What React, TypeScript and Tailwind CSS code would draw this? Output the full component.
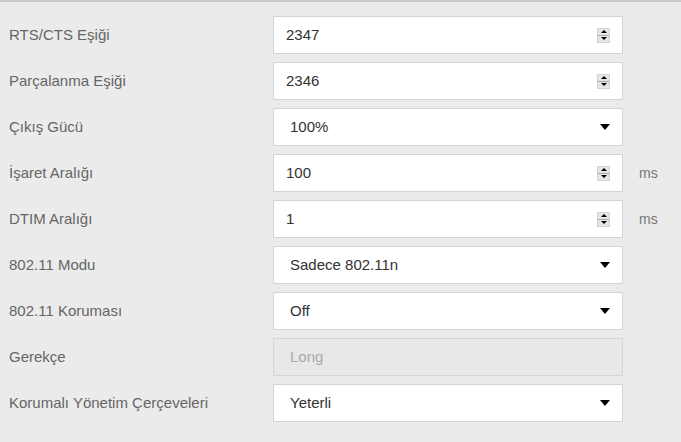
import React from "react";

type Row =
  | { label: string; kind: "number"; value: string; unit?: string }
  | { label: string; kind: "select"; value: string }
  | { label: string; kind: "disabled"; value: string };

const rows: Row[] = [
  { label: "RTS/CTS Eşiği", kind: "number", value: "2347" },
  { label: "Parçalanma Eşiği", kind: "number", value: "2346" },
  { label: "Çıkış Gücü", kind: "select", value: "100%" },
  { label: "İşaret Aralığı", kind: "number", value: "100", unit: "ms" },
  { label: "DTIM Aralığı", kind: "number", value: "1", unit: "ms" },
  { label: "802.11 Modu", kind: "select", value: "Sadece 802.11n" },
  { label: "802.11 Koruması", kind: "select", value: "Off" },
  { label: "Gerekçe", kind: "disabled", value: "Long" },
  { label: "Korumalı Yönetim Çerçeveleri", kind: "select", value: "Yeterli" },
];

function Spinner() {
  return (
    <div className="flex flex-col w-[13px] h-[15px] border border-[#d4d4d4] bg-[#e6e6e6]">
      <div className="flex-1 flex items-center justify-center border-b border-[#a8a8a8]">
        <div className="w-0 h-0 border-l-[3px] border-r-[3px] border-b-[3px] border-l-transparent border-r-transparent border-b-black" />
      </div>
      <div className="flex-1 flex items-center justify-center">
        <div className="w-0 h-0 border-l-[3px] border-r-[3px] border-t-[3px] border-l-transparent border-r-transparent border-t-black" />
      </div>
    </div>
  );
}

function Caret() {
  return (
    <div className="w-0 h-0 border-l-[5px] border-r-[5px] border-t-[6px] border-l-transparent border-r-transparent border-t-black" />
  );
}

export default function App() {
  return (
    <div className="w-[681px] h-[442px] bg-[#ebebeb] border-t-2 border-[#c9c9c9] text-[15px] overflow-hidden font-['Liberation_Sans',Arial,sans-serif]">
      <div className="flex flex-col gap-[8px] pt-[14px] pl-[9px]">
        {rows.map((r) => (
          <div key={r.label} className="flex items-center h-[38px]">
            <div className="w-[264px] text-[#666666]">{r.label}</div>
            {r.kind === "disabled" ? (
              <div className="w-[350px] h-[38px] flex items-center pl-[16px] bg-[#e8e8e8] border border-[#d6d6d6] text-[#aaaaaa]">
                {r.value}
              </div>
            ) : (
              <div
                className={`w-[350px] h-[38px] flex items-center justify-between bg-white border border-[#d3d6db] text-[#333333] ${
                  r.kind === "number" ? "pl-[12px] pr-[12px]" : "pl-[16px] pr-[12px]"
                }`}
              >
                <span>{r.value}</span>
                {r.kind === "number" ? <Spinner /> : <Caret />}
              </div>
            )}
            {r.kind === "number" && r.unit && (
              <div className="ml-[16px] text-[#777777] text-[14px]">{r.unit}</div>
            )}
          </div>
        ))}
      </div>
    </div>
  );
}
